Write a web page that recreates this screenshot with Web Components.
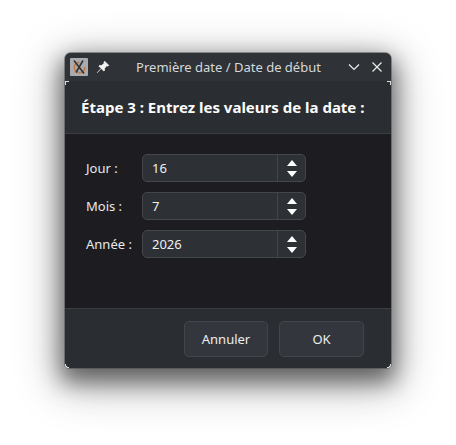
<!DOCTYPE html>
<html lang="fr">
<head>
<meta charset="utf-8">
<title>Première date / Date de début</title>
<style>
  html, body { margin: 0; height: 100%; background: #fff; }
  body { font-family: "Noto Sans", sans-serif; color: #fcfcfc; }
</style>
</head>
<body>
<date-window caption="Première date / Date de début">
  <span slot="heading">Étape 3 : Entrez les valeurs de la date :</span>
  <spin-row label="Jour :" value="16"></spin-row>
  <spin-row label="Mois :" value="7"></spin-row>
  <spin-row label="Année :" value="2026"></spin-row>
  <dialog-button slot="actions" narrow>Annuler</dialog-button>
  <dialog-button slot="actions">OK</dialog-button>
</date-window>

<script>
class DateWindow extends HTMLElement {
  constructor() {
    super();
    this.shadowDOM = this.attachShadow({ mode: 'open' });
  }

  connectedCallback() {
    this.render();
  }

  render() {
    const caption = this.getAttribute('caption');
    this.shadowDOM.innerHTML = `
      <style>
        :host {
          box-sizing: border-box;
          width: 326px;
          height: 315px;
          position: absolute;
          left: 65px;
          top: 53px;
          border-radius: 6px 6px 4px 4px;
          background: #2a2e32;
          box-shadow: 0 0 0 1px rgba(70, 72, 76, 0.5), 0 10px 22px 4px rgba(0, 0, 0, 0.5), 0 12px 44px 8px rgba(0, 0, 0, 0.28);
          display: flex;
          flex-direction: column;
        }
        .titlebar {
          height: 28px;
          display: flex;
          align-items: center;
          padding: 0 7px 0 5px;
          gap: 8px;
          background: #2f3338;
          border-radius: 6px 6px 0 0;
          flex: none;
        }
        .caption {
          flex: 1;
          text-align: center;
          font-size: 13px;
          color: #d6d8da;
          white-space: nowrap;
        }
        .controls { display: flex; gap: 9px; align-items: center; }
        svg { display: block; }
        .heading {
          height: 52px;
          flex: none;
          box-sizing: border-box;
          display: flex;
          align-items: center;
          padding: 0 16px 1px;
          font-size: 15px;
          font-weight: 700;
          color: #fcfcfc;
          background: #2a2e32;
        }
        .body {
          flex: 1;
          background: #1d1d21;
          border-top: 1px solid #3a3e43;
          border-bottom: 1px solid #3a3e43;
          padding: 20px 85px 0 21px;
          display: flex;
          flex-direction: column;
          gap: 10px;
        }
        .actions {
          height: 59px;
          flex: none;
          box-sizing: border-box;
          display: flex;
          justify-content: flex-end;
          gap: 11px;
          padding: 12px 27px 0 0;
          background: #2a2e32;
          border-radius: 0 0 4px 4px;
        }
        .tick { position: absolute; width: 3px; height: 3px; border: 0 solid #e0e0e0; }
        .tl { left: 0; top: 28px; border-width: 1px 0 0 1px; }
        .tr { right: 0; top: 28px; border-width: 1px 1px 0 0; }
        .bl { left: 0; bottom: 0; border-width: 0 0 1px 1px; border-radius: 0 0 0 3px; }
        .br { right: 0; bottom: 0; border-width: 0 1px 1px 0; border-radius: 0 0 3px 0; }
      </style>
      <div class="titlebar">
        <svg width="18" height="18" viewBox="0 0 18 18">
          <rect width="18" height="18" rx="1" fill="#a9abae"/>
          <path d="M9.5 4.4 A5.2 5.2 0 1 0 9.5 14.8 A5.2 5.2 0 0 0 14.8 9" fill="none" stroke="#c9793f" stroke-width="1.6"/>
          <path d="M4 2.5 L14 15.5 M13 2.5 L6 14.5" stroke="#333" stroke-width="1.6" fill="none"/>
        </svg>
        <svg width="14" height="14" viewBox="0 0 14 14">
          <path d="M8.6 1.2 L12.8 5.4 L11.6 6 L10.6 5.8 L8.4 8.6 L8.6 10.4 L7.8 11 L3 6.2 L3.6 5.4 L5.4 5.6 L8.2 3.4 L8 2.4 Z M5 8.6 L1.2 12.8" fill="#f4f4f4" stroke="#f4f4f4" stroke-width="0.8" stroke-linejoin="round"/>
        </svg>
        <div class="caption">${caption}</div>
        <div class="controls">
          <svg width="14" height="14" viewBox="0 0 14 14"><path d="M2 4.5 L7 9.5 L12 4.5" fill="none" stroke="#eceded" stroke-width="1.2"/></svg>
          <svg width="14" height="14" viewBox="0 0 14 14"><path d="M2.5 2.5 L11.5 11.5 M11.5 2.5 L2.5 11.5" fill="none" stroke="#eceded" stroke-width="1.2"/></svg>
        </div>
      </div>
      <div class="heading"><slot name="heading"></slot></div>
      <div class="body"><slot></slot></div>
      <div class="actions"><slot name="actions"></slot></div>
      <i class="tick tl"></i><i class="tick tr"></i><i class="tick bl"></i><i class="tick br"></i>
    `;
  }
}

class SpinRow extends HTMLElement {
  constructor() {
    super();
    this.shadowDOM = this.attachShadow({ mode: 'open' });
  }

  connectedCallback() {
    this.render();
  }

  render() {
    this.shadowDOM.innerHTML = `
      <style>
        :host {
          display: flex;
          align-items: center;
          justify-content: space-between;
          height: 28px;
          font-size: 13px;
          color: #e8e9ea;
        }
        .box {
          box-sizing: border-box;
          width: 164px;
          height: 28px;
          display: flex;
          background: #2d3136;
          border: 1px solid #43474c;
          border-radius: 5px;
        }
        .value { flex: 1; padding-left: 9px; line-height: 26px; color: #f0f0f0; }
        .arrows {
          box-sizing: border-box;
          width: 28px;
          border-left: 1px solid #43474c;
          display: flex;
          flex-direction: column;
          align-items: center;
          justify-content: center;
          gap: 5px;
        }
        svg { display: block; }
      </style>
      <span>${this.getAttribute('label')}</span>
      <div class="box">
        <div class="value">${this.getAttribute('value')}</div>
        <div class="arrows">
          <svg width="10" height="6" viewBox="0 0 10 6"><path d="M5 0 L10 6 H0 Z" fill="#fcfcfc"/></svg>
          <svg width="10" height="6" viewBox="0 0 10 6"><path d="M0 0 H10 L5 6 Z" fill="#fcfcfc"/></svg>
        </div>
      </div>
    `;
  }
}

class DialogButton extends HTMLElement {
  constructor() {
    super();
    this.shadowDOM = this.attachShadow({ mode: 'open' });
  }

  connectedCallback() {
    this.render();
  }

  render() {
    this.shadowDOM.innerHTML = `
      <style>
        :host {
          display: flex;
          align-items: center;
          justify-content: center;
          box-sizing: border-box;
          width: 85px;
          height: 36px;
          font-size: 13px;
          color: #eceded;
          background: #33373d;
          border: 1px solid #43474c;
          border-radius: 5px;
        }
        :host([narrow]) { width: 84px; }
      </style>
      <slot></slot>
    `;
  }
}

customElements.define('date-window', DateWindow);
customElements.define('spin-row', SpinRow);
customElements.define('dialog-button', DialogButton);
</script>
</body>
</html>
